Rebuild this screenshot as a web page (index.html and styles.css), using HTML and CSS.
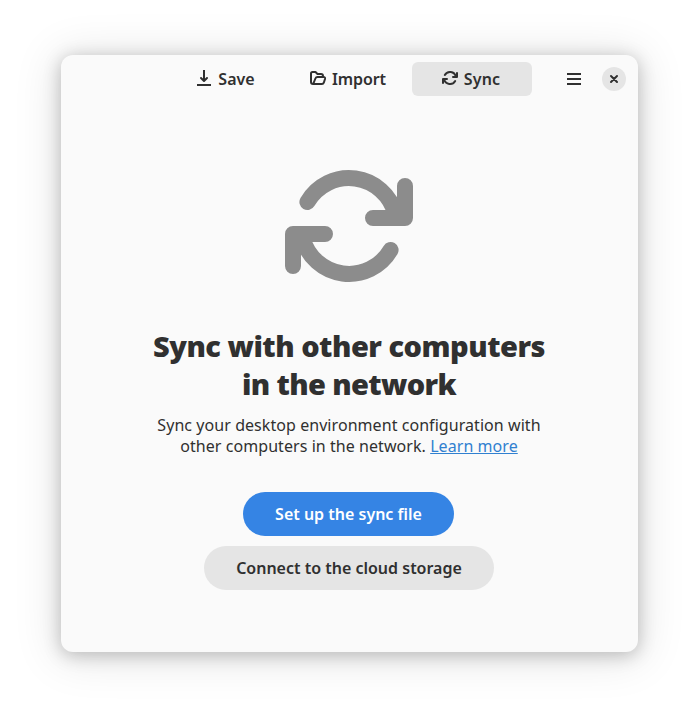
FILE: index.html
```html
<!DOCTYPE html>
<html lang="en">
<head>
<meta charset="utf-8">
<title>Sync</title>
<link rel="stylesheet" href="styles.css">
</head>
<body>
<svg class="defs" aria-hidden="true">
  <symbol id="sync" viewBox="0 0 16 16">
    <path d="M2.8 5A6 6 0 0 1 13.8 6.5M13.2 11A6 6 0 0 1 2.2 9.5M15 3V7H11M5 9H1V13"/>
  </symbol>
</svg>
<div class="window">
  <header class="headerbar">
    <nav class="tabs">
      <button class="tab"><svg class="icon" viewBox="0 0 16 16"><path class="square" d="M8 0V10M1 15H15"/><path d="M5 8L8 11L11 8"/></svg><span>Save</span></button>
      <button class="tab"><svg class="icon" viewBox="0 0 16 16"><path d="M3.2 14H3Q1 14 1 12V3.5Q1 2 2.5 2H5.5L7.5 4H11Q13 4 13 6V7M3.2 14H12Q13.3 14 13.8 12.7L15 9Q15.4 7 13.5 7H7.5Q6 7 5.4 8.5L3.2 14"/></svg><span>Import</span></button>
      <button class="tab active"><svg class="icon"><use href="#sync"/></svg><span>Sync</span></button>
    </nav>
    <button class="menu" aria-label="Menu"><svg class="icon" viewBox="0 0 16 16"><path class="square" d="M1 3H15M1 8H15M1 13H15"/></svg></button>
    <button class="close" aria-label="Close"><svg class="icon" viewBox="0 0 16 16"><path d="M5 5L11 11M11 5L5 11"/></svg></button>
  </header>
  <main class="status">
    <svg class="hero"><use href="#sync"/></svg>
    <h1>Sync with other computers<br><span class="second-line">in the network</span></h1>
    <p>Sync your desktop environment configuration with<br>other computers in the network. <a href="#">Learn more</a></p>
    <button class="pill primary">Set up the sync file</button>
    <button class="pill secondary">Connect to the cloud storage</button>
  </main>
</div>
</body>
</html>
```
FILE: styles.css
```css
* { box-sizing: border-box; }
body {
  margin: 0;
  height: 719px;
  padding: 55px 61px 67px;
  background: #fff;
  color: #303030;
  font-family: "Noto Sans", sans-serif;
  overflow: hidden;
}
.defs { display: none; }
.window {
  height: 597px;
  border-radius: 12px;
  background: #fafafa;
  box-shadow: 0 3px 18px rgba(0,0,0,.23), 0 3px 44px 6px rgba(0,0,0,.1);
}
button {
  border: 0;
  padding: 0;
  background: none;
  color: inherit;
  font: 600 16px/22px "Noto Sans", sans-serif;
  white-space: nowrap;
}
svg {
  fill: none;
  stroke: currentColor;
  stroke-width: 2;
  stroke-linecap: round;
  stroke-linejoin: round;
}
.square { stroke-linecap: butt; }
.icon { width: 16px; height: 16px; flex: none; }
.headerbar {
  display: flex;
  align-items: center;
  height: 48px;
  padding-right: 12px;
}
.tabs { display: flex; gap: 6px; margin-left: 105px; }
.tab {
  display: flex;
  align-items: center;
  justify-content: center;
  gap: 6px;
  width: 117px;
  height: 34px;
  border-radius: 6px;
}
.tab:nth-child(1) { width: 119px; }
.tab .icon { margin-top: -2px; }
.tab:nth-child(2) { width: 117px; padding-right: 3px; }
.tab:nth-child(2) span { letter-spacing: -.1px; }
.tab.active { width: 120px; padding-right: 2px; margin-left: -2px; background: #e5e5e5; }
.tab.active span { letter-spacing: .15px; }
.menu { display: flex; justify-content: center; width: 34px; margin-left: 25px; }
.close {
  display: flex;
  align-items: center;
  justify-content: center;
  width: 24px;
  height: 24px;
  margin-left: auto;
  border-radius: 50%;
  background: #e5e5e5;
}
.status {
  display: flex;
  flex-direction: column;
  align-items: center;
  padding: 59px 1px 0 0;
}
.hero { width: 128px; height: 128px; margin-right: 1px; color: #8c8c8c; }
h1 {
  margin: 37px 0 0;
  font-size: 29px;
  line-height: 38px;
  font-weight: 900;
  letter-spacing: -.5px;
  text-align: center;
  white-space: nowrap;
}
.second-line { letter-spacing: -.65px; }
p {
  margin: 12px 0 0;
  font-size: 16px;
  line-height: 21px;
  letter-spacing: .06px;
  text-align: center;
  white-space: nowrap;
}
a { color: #3080d0; text-underline-offset: 1px; text-decoration-thickness: 1px; }
.pill { height: 44px; border-radius: 22px; }
.primary { width: 211px; margin-top: 35px; margin-right: 1px; background: #3584e4; color: #fff; }
.secondary { width: 290px; margin-top: 10px; background: #e5e5e5; }
```
